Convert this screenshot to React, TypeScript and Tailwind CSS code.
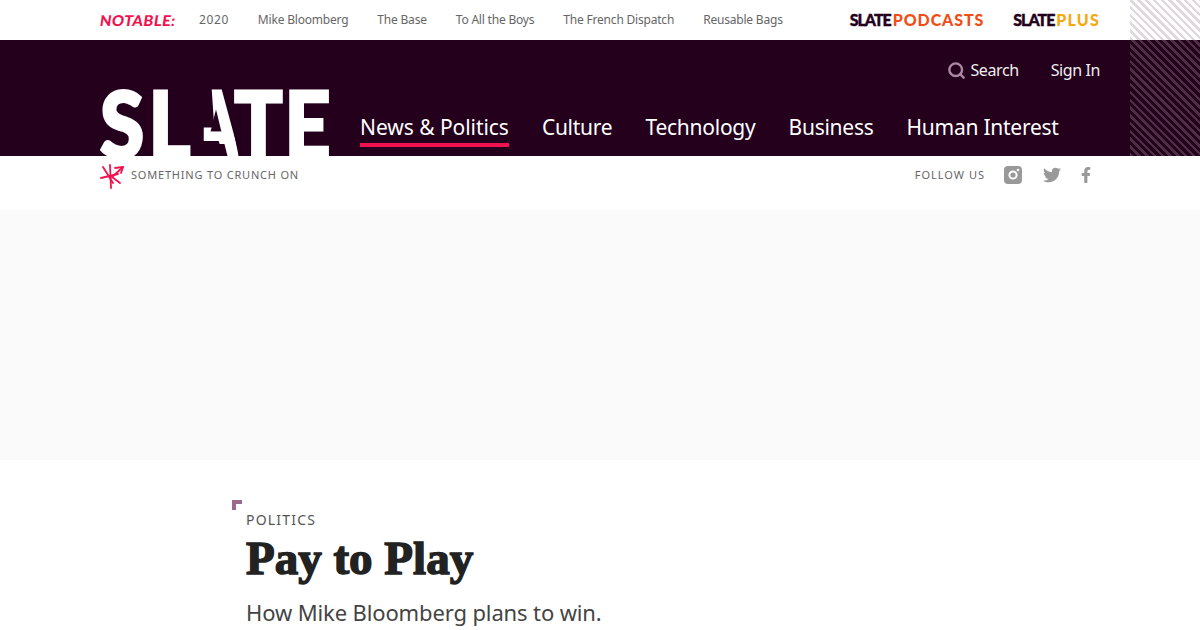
import React from 'react';
import { Search } from 'lucide-react';
import { FaFacebookF, FaTwitter } from 'react-icons/fa';

const sans = "font-['Noto_Sans','Open_Sans',sans-serif]";

const notable = ['Mike Bloomberg', 'The Base', 'To All the Boys', 'The French Dispatch', 'Reusable Bags'];
const sections = ['News & Politics', 'Culture', 'Technology', 'Business', 'Human Interest'];

const Wordmark: React.FC<{ accent: string; word: string; tracking: string }> = ({ accent, word, tracking }) => (
  <span className="flex items-center font-['Lato',sans-serif] text-[16px] leading-none font-black">
    <span className="mr-[2px] tracking-[-1px] text-[#25001d] [-webkit-text-stroke:0.4px_#25001d]">SLATE</span>
    <span className={`${accent} ${tracking}`}>{word}</span>
  </span>
);

const Logo: React.FC = () => (
  <div className="h-[68px] w-[229px] overflow-hidden">
    <div className="flex h-[68px] w-[260px] origin-left scale-x-[0.88] font-['Lato',sans-serif] text-[91px] leading-[69px] font-black text-white [-webkit-text-stroke:3px_#fff]">
      <span>S</span>
      <span className="ml-[5px]">L</span>
      <span className="-ml-[3px] scale-x-[0.8] [clip-path:polygon(40%_0,70%_0,100%_100%,64%_100%,56%_78%,22%_78%,22%_58%,46%_58%)]">A</span>
      <span className="-ml-[11px]">T</span>
      <span className="ml-[2px]">E</span>
    </div>
  </div>
);

const Scribble: React.FC = () => (
  <svg className="mt-[4px]" width="24" height="26" viewBox="0 0 24 26" fill="none" stroke="#f0134f" strokeWidth="1.8" strokeLinecap="round" strokeLinejoin="round">
    <path d="M10 1l1 23" />
    <path d="M1 14l17-4" />
    <path d="M3 3l10 16" />
    <path d="M23 3L12 13l8 6" />
    <path d="M15 4l8-1-2 6" />
  </svg>
);

const Instagram: React.FC = () => (
  <svg width="18" height="18" viewBox="0 0 18 18">
    <rect width="18" height="18" rx="4" fill="#999" />
    <circle cx="9" cy="9" r="3.6" fill="none" stroke="#fff" strokeWidth="2" />
    <circle cx="14" cy="4" r="1.3" fill="#fff" />
  </svg>
);

export default function App() {
  return (
    <div className={`h-[630px] w-[1200px] overflow-hidden bg-white ${sans}`}>
      <header className="flex">
        <div className="flex-1">
          {/* notable bar */}
          <div className="flex h-10 items-center pr-[30px] pl-[100px]">
            <span className="w-[99px] font-['Lato',sans-serif] text-[15px] leading-none font-black tracking-[0.4px] text-[#f0134f]">
              <span className="inline-block -skew-x-[8deg]">NOTABLE:</span>
            </span>
            <nav className="flex gap-[29px] text-[12px] tracking-[-0.2px] text-[#666]">
              <a className="tracking-[0.6px]">2020</a>
              {notable.map((item) => (
                <a key={item}>{item}</a>
              ))}
            </nav>
            <div className="ml-auto flex gap-[29px]">
              <Wordmark accent="text-[#f04e14]" word="PODCASTS" tracking="tracking-[0.9px]" />
              <Wordmark accent="text-[#f5a90f]" word="PLUS" tracking="tracking-[1.2px]" />
            </div>
          </div>

          {/* main masthead */}
          <div className="h-[116px] bg-[#25001d] pr-[30px] pl-[100px] text-white">
            <div className="flex h-[48px] items-end justify-end gap-8 pb-[6px] text-[16px] leading-6 tracking-[-0.4px] text-[#eee]">
              <span className="flex items-center gap-1">
                <Search size={19} strokeWidth={3} className="text-[#a98aa0]" />
                Search
              </span>
              <span>Sign In</span>
            </div>
            <div className="flex">
              <Logo />
              <nav className="ml-[31px] flex gap-[33px] pt-[24px] text-[21px] leading-[31px] tracking-[-0.25px]">
                {sections.map((item, i) => (
                  <a key={item} className={i === 0 ? 'h-[35px] border-b-4 border-[#f0134f] tracking-[-0.05px]' : 'h-[35px]'}>
                    {item}
                  </a>
                ))}
              </nav>
            </div>
          </div>
        </div>

        {/* hatched strip */}
        <div className="flex w-[70px] flex-col">
          <div className="h-10 bg-[repeating-linear-gradient(45deg,#e0d8de_0,#e0d8de_2.5px,#ffffff_2.5px,#ffffff_5.5px)]" />
          <div className="flex-1 bg-[repeating-linear-gradient(45deg,#4d2f45_0,#4d2f45_2.5px,#25001d_2.5px,#25001d_5.5px)]" />
        </div>
      </header>

      {/* tagline row */}
      <div className="flex h-[54px] items-center pr-[100px] pb-[16px] pl-[100px] text-[11px] tracking-[0.8px] text-[#666]">
        <Scribble />
        <span className="ml-[7px]">SOMETHING TO CRUNCH ON</span>
        <div className="ml-auto flex items-center text-[#999]">
          <span className="mr-[19px] tracking-[1px] text-[#666]">FOLLOW US</span>
          <Instagram />
          <FaTwitter size={18} className="ml-[21px]" />
          <FaFacebookF size={16} className="mr-[6px] ml-[17px]" />
        </div>
      </div>

      {/* ad slot */}
      <div className="h-[250px] bg-[#fafafa]" />

      {/* article head */}
      <article className="relative pt-[50px] pl-[246px]">
        <span className="absolute top-10 left-[232px] h-[10px] w-[10px] bg-[#9c6a8c] [clip-path:polygon(0_0,100%_0,100%_40%,40%_40%,40%_100%,0_100%)]" />
        <p className="text-[14px] leading-5 tracking-[1.2px] text-[#555]">POLITICS</p>
        <h1 className="font-['Liberation_Serif',serif] text-[47px] leading-[56px] font-bold text-[#222] [-webkit-text-stroke:1.5px_#222]">
          Pay to Play
        </h1>
        <p className="mt-[10px] text-[22px] leading-8 tracking-[-0.13px] text-[#444]">How Mike Bloomberg plans to win.</p>
      </article>
    </div>
  );
}
